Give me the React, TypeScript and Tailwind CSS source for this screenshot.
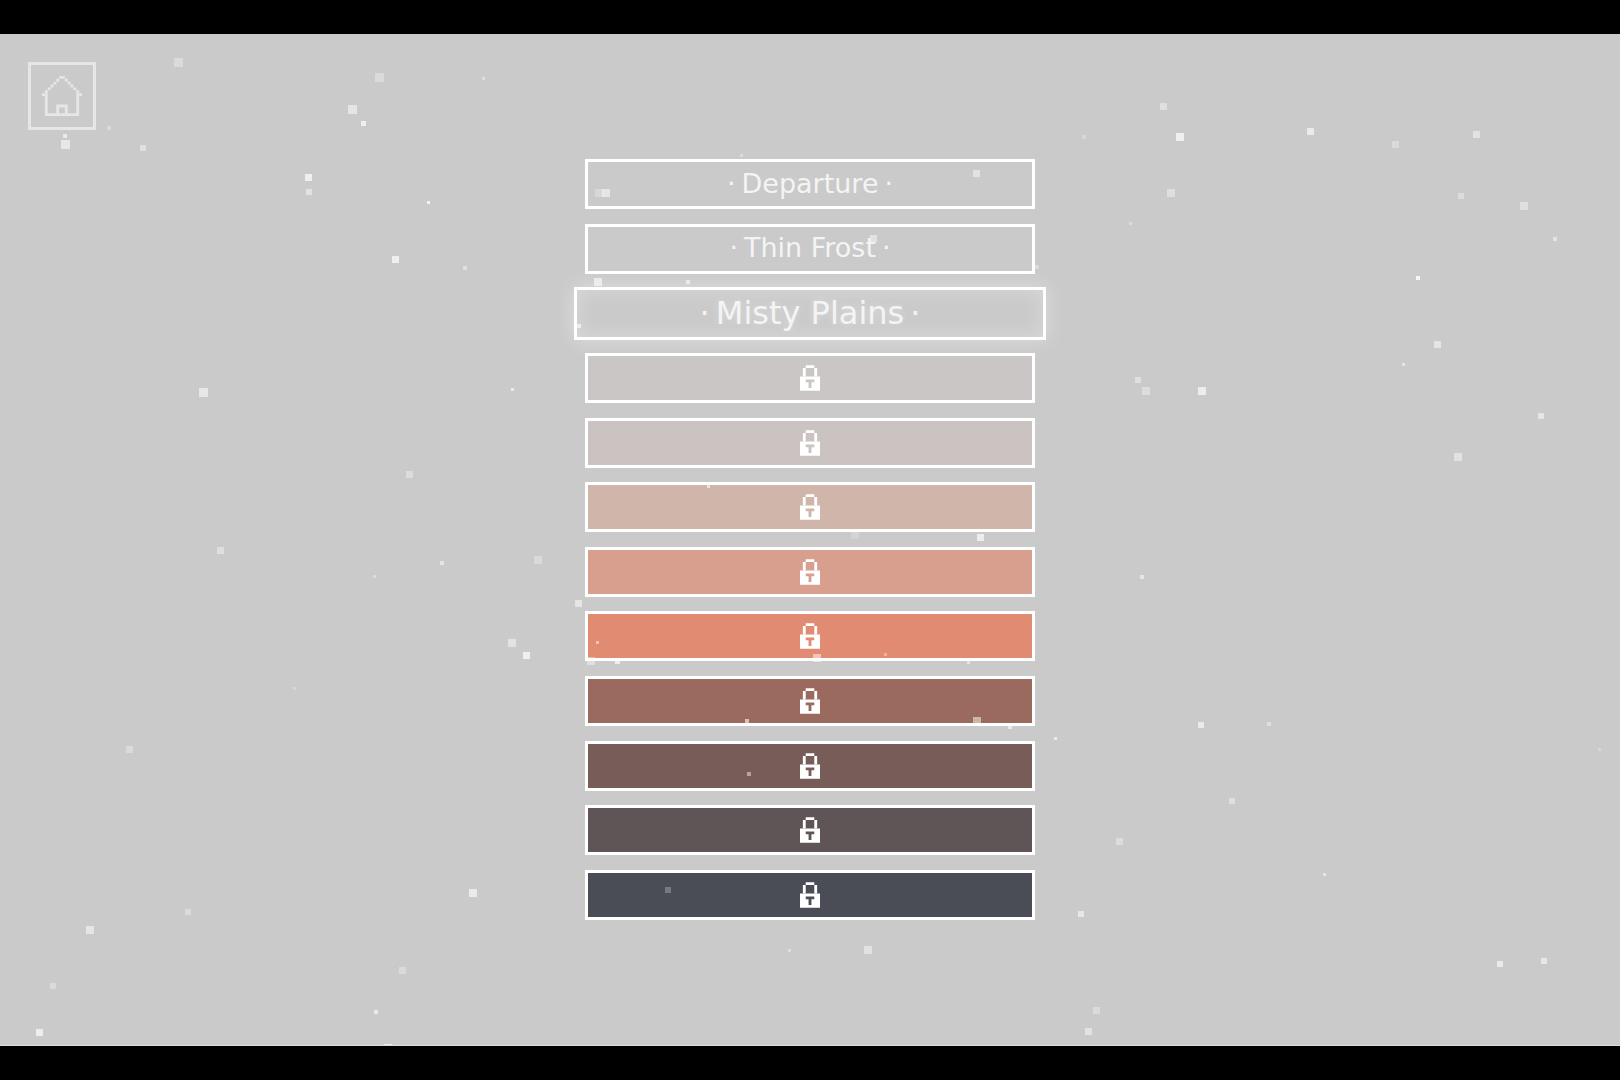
import clsx from "clsx";

interface Level {
  name: string;
  locked: boolean;
  fill: string;
}

const LEVELS: Level[] = [
  { name: "Departure", locked: false, fill: "bg-transparent" },
  { name: "Thin Frost", locked: false, fill: "bg-transparent" },
  { name: "Misty Plains", locked: false, fill: "bg-transparent" },
  { name: "Level 4", locked: true, fill: "bg-[#cac6c5]" },
  { name: "Level 5", locked: true, fill: "bg-[#cbc3c1]" },
  { name: "Level 6", locked: true, fill: "bg-[#d0b5ab]" },
  { name: "Level 7", locked: true, fill: "bg-[#d99f8e]" },
  { name: "Level 8", locked: true, fill: "bg-[#e18b73]" },
  { name: "Level 9", locked: true, fill: "bg-[#996a5d]" },
  { name: "Level 10", locked: true, fill: "bg-[#775c58]" },
  { name: "Level 11", locked: true, fill: "bg-[#605556]" },
  { name: "Level 12", locked: true, fill: "bg-[#4a4d56]" },
];

const SELECTED = 2;

// center x, center y, size, opacity
const SNOW: [number, number, number, number][] = [
  [179, 29, 9, 0.3], [380, 44, 9, 0.3], [484, 45, 3, 0.4], [353, 76, 9, 0.5],
  [364, 90, 5, 0.7], [109, 94, 4, 0.3], [65, 102, 4, 0.6], [66, 111, 9, 0.55],
  [143, 114, 6, 0.4], [309, 144, 7, 0.7], [309, 158, 6, 0.45], [429, 169, 3, 0.75],
  [396, 226, 7, 0.7], [465, 234, 4, 0.4], [204, 359, 9, 0.55], [513, 356, 3, 0.6],
  [410, 441, 7, 0.35], [221, 517, 7, 0.4], [442, 529, 4, 0.5], [375, 543, 3, 0.3],
  [538, 526, 8, 0.3], [512, 609, 8, 0.45], [527, 622, 7, 0.7], [295, 655, 3, 0.25],
  [130, 716, 7, 0.3], [473, 859, 8, 0.6], [188, 878, 6, 0.3], [90, 896, 8, 0.5],
  [53, 952, 6, 0.3], [403, 937, 7, 0.3], [376, 978, 4, 0.6], [40, 999, 7, 0.65],
  [388, 1014, 8, 0.6],
  [742, 122, 3, 0.35], [599, 159, 8, 0.25], [606, 159, 8, 0.5], [977, 140, 7, 0.45],
  [874, 205, 7, 0.45], [598, 248, 8, 0.6], [688, 248, 4, 0.55], [1037, 233, 4, 0.35],
  [579, 292, 4, 0.6], [709, 453, 3, 0.6], [855, 501, 8, 0.2], [981, 504, 7, 0.65],
  [579, 570, 7, 0.5], [598, 609, 3, 0.5], [591, 627, 8, 0.4], [618, 628, 5, 0.7],
  [817, 624, 8, 0.5], [886, 621, 3, 0.35], [969, 629, 3, 0.5], [747, 687, 4, 0.6],
  [977, 687, 8, 0.5], [1010, 693, 4, 0.6], [1056, 705, 3, 0.6], [749, 740, 4, 0.45],
  [668, 856, 6, 0.25], [790, 917, 3, 0.4], [868, 916, 8, 0.45],
  [1164, 73, 7, 0.4], [1084, 103, 4, 0.25], [1180, 103, 8, 0.7], [1311, 98, 7, 0.6],
  [1396, 111, 7, 0.3], [1477, 101, 7, 0.45], [1171, 159, 8, 0.4], [1461, 162, 6, 0.35],
  [1524, 172, 8, 0.4], [1131, 190, 3, 0.3], [1555, 205, 4, 0.45], [1418, 244, 4, 0.8],
  [1438, 311, 7, 0.5], [1404, 331, 3, 0.5], [1138, 346, 6, 0.4], [1146, 357, 8, 0.35],
  [1202, 357, 8, 0.65], [1541, 382, 6, 0.5], [1458, 423, 8, 0.45], [1142, 543, 4, 0.5],
  [1201, 691, 6, 0.6], [1269, 690, 4, 0.4], [1600, 716, 3, 0.25], [1232, 767, 6, 0.4],
  [1120, 808, 7, 0.35], [1325, 841, 3, 0.5], [1081, 880, 6, 0.55], [1500, 930, 6, 0.6],
  [1544, 927, 6, 0.55], [1097, 977, 7, 0.3], [1089, 998, 7, 0.45],
];

function Snow() {
  return (
    <svg className="pointer-events-none absolute inset-0 h-full w-full" aria-hidden="true">
      {SNOW.map(([x, y, size, opacity]) => (
        <rect
          key={`${x}-${y}`}
          x={Math.floor(x - size / 2)}
          y={Math.floor(y - size / 2)}
          width={size}
          height={size}
          fill="#fff"
          opacity={opacity}
        />
      ))}
    </svg>
  );
}

function HouseIcon() {
  return (
    <svg className="h-10 w-10" viewBox="0 0 14 14" fill="currentColor" aria-hidden="true">
      {/* roof */}
      <path d="M6 0h2v1h-2zM5 1h1v1h-1zM4 2h1v1h-1zM3 3h1v1h-1zM2 4h1v1h-1zM1 5h1v1h-1zM0 6h1v1h-1z" />
      <path d="M8 1h1v1h-1zM9 2h1v1h-1zM10 3h1v1h-1zM11 4h1v1h-1zM12 5h1v1h-1zM13 6h1v1h-1z" />
      {/* walls and door */}
      <path d="M1 6h1v7h3v-3h4v3h3v-7h1v8h-12zM6 11v2h2v-2z" fillRule="evenodd" />
    </svg>
  );
}

function LockIcon() {
  return (
    <svg className="h-[26px] w-5" viewBox="0 0 7 9" fill="currentColor" aria-hidden="true">
      <path d="M2 0h3v1h-3zM1 1h1v3h-1zM5 1h1v3h-1z" />
      <path d="M0 4h7v5h-7zM2 5v1h1v2h1v-2h1v-1z" fillRule="evenodd" />
    </svg>
  );
}

function LevelButton({ level, selected }: { level: Level; selected: boolean }) {
  return (
    <button
      type="button"
      disabled={level.locked}
      aria-label={level.locked ? `${level.name}, locked` : undefined}
      aria-current={selected ? "true" : undefined}
      className={clsx(
        "flex shrink-0 items-center justify-center gap-1.5 border-3 border-white text-white",
        level.fill,
        selected
          ? "h-[53px] w-[472px] text-[32px] shadow-[0_0_20px_rgba(255,255,255,0.4),inset_0_0_20px_rgba(255,255,255,0.3)] [text-shadow:0_0_8px_rgba(255,255,255,0.5)]"
          : "h-[50px] w-[450px] text-[27px]"
      )}
    >
      {level.locked ? (
        <LockIcon />
      ) : (
        <>
          <span className="opacity-80">·</span>
          <span className="opacity-80">{level.name}</span>
          <span className="opacity-80">·</span>
        </>
      )}
    </button>
  );
}

export default function App() {
  return (
    <div className="flex h-screen flex-col bg-black py-[34px] font-['DejaVu_Sans',sans-serif]">
      <main className="relative grid flex-1 grid-cols-[1fr_auto_1fr] overflow-hidden border-b border-[#dcdcdc] bg-[#cacaca]">
        <div className="p-7">
          <button
            type="button"
            aria-label="Home"
            className="flex h-[68px] w-[68px] items-center justify-center border-3 border-[#e6e6e6] text-[#e6e6e6]"
          >
            <HouseIcon />
          </button>
        </div>

        <nav aria-label="Levels" className="flex py-[125px]">
          <ul className="flex w-[450px] flex-col justify-between">
            {LEVELS.map((level, i) => (
              <li key={level.name} className="flex h-[50px] items-center justify-center">
                <LevelButton level={level} selected={i === SELECTED} />
              </li>
            ))}
          </ul>
        </nav>

        <Snow />
      </main>
    </div>
  );
}
